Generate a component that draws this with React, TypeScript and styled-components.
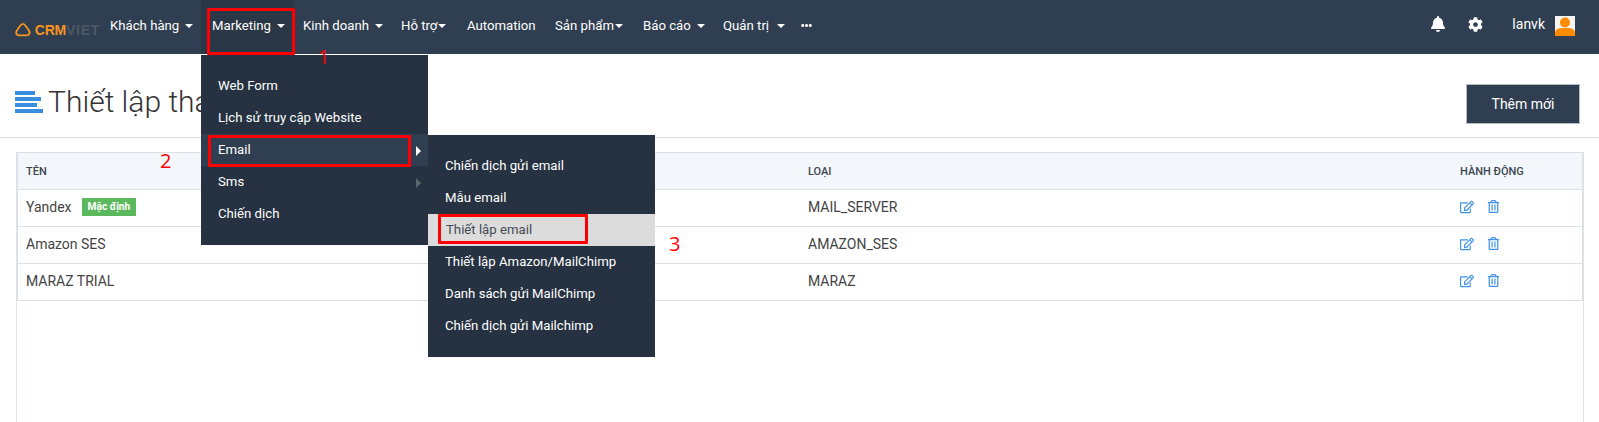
import React from "react";
import styled, { createGlobalStyle } from "styled-components";
import { FaBell, FaCog, FaRegEdit, FaRegTrashAlt, FaEllipsisH } from "react-icons/fa";

const Global = createGlobalStyle`
  html, body { margin: 0; padding: 0; background: #fff; }
  body { font-family: Roboto, "Noto Sans", sans-serif; width: 1599px; height: 422px; overflow: hidden; }
`;
const Page = styled.div`position: relative; width: 1599px; height: 422px; overflow: hidden;`;
const NavBar = styled.nav`height: 54px; background: #2f3e50; display: flex; align-items: flex-start; color: #fff; font-size: 13.2px; font-weight: 400;`;
const Logo = styled.div`display: flex; align-items: center; width: 100px; height: 54px; padding: 5px 0 0 15px; box-sizing: border-box; font-family: "Liberation Sans", sans-serif; font-weight: 700; font-size: 14px;`;
const LogoCrm = styled.span`color: #f7941d; margin-left: 4px; letter-spacing: -0.2px;`;
const LogoViet = styled.span`color: #4c5965; letter-spacing: 0.7px;`;
const NavItem = styled.div<{ $pad?: number; $w: number; $active?: boolean }>`
  height: 54px; width: ${p => p.$w}px; flex: none; display: flex; align-items: center; padding: 0 0 4px ${p => p.$pad ?? 10}px; box-sizing: border-box;
  white-space: nowrap; ${p => p.$active ? "background: #2a3746;" : ""}
`;
const Caret = styled.i<{ $gap: number }>`
  margin: 2px 0 0 ${p => p.$gap}px; width: 0; height: 0; display: block;
  border-left: 4px solid transparent; border-right: 4px solid transparent; border-top: 4px solid #fff;
`;
const Right = styled.div`margin-left: auto; display: flex; align-items: center; height: 48px; padding-right: 24px;`;
const Username = styled.span`font-size: 14px; font-weight: 400; margin: 0 10px 0 29px;`;
const Gear = styled.span`margin-left: 22px; display: flex;`;
const Avatar = styled.svg`width: 20px; height: 20px; display: block; margin-top: 4px;`;
const Header = styled.header`height: 84px; box-sizing: border-box; border-bottom: 1px solid #d5dde3; display: flex; align-items: flex-start; justify-content: space-between; padding: 29px 19px 0 15px;`;
const Title = styled.h1`margin: 0; display: flex; align-items: center; gap: 5px; font-weight: 300; font-size: 30px; color: #333; line-height: 38px;`;
const AddButton = styled.button`width: 114px; height: 40px; margin: 1px 0 0; background: #2f3e50; color: #fff; border: 1px solid #b5bbc0; font: 400 14px Roboto, sans-serif;`;
const Wrap = styled.div`margin: 14px 15px 0 16px; height: 270px; border-left: 1px solid #dde3ee; border-right: 1px solid #dfe1e8;`;
const Table = styled.div`border: 1px solid #dcdfe3; border-bottom: 0;`;
const Row = styled.div<{ $head?: boolean }>`
  display: grid; grid-template-columns: 782px 652px 1fr; height: 37px; box-sizing: border-box; align-items: center;
  border-bottom: 1px solid #dcdfe3; padding: 0 0 ${p => p.$head ? 0 : 2}px 8px; font-size: 14px; color: #444;
  ${p => p.$head ? "background: #f3f6fa; font-size: 11px; font-weight: 500; color: #3c4650;" : ""}
`;
const NameCell = styled.div`display: flex; align-items: center;`;
const Badge = styled.span`margin-left: 10px; background: #5cb85c; color: #fff; font-size: 10.2px; font-weight: 700; padding: 0 6px; height: 18px; line-height: 18px;`;
const Actions = styled.div`display: flex; gap: 13px; color: #3f92e6; align-items: center; margin-top: -1px;`;
const Menu = styled.div`position: absolute; background: #263241; box-sizing: border-box; display: flex; flex-direction: column;`;
const MainMenu = styled(Menu)`left: 201px; top: 55px; width: 227px; height: 190px; padding-top: 15px;`;
const SubMenu = styled(Menu)`left: 428px; top: 135px; width: 227px; height: 222px; padding-top: 15px;`;
const MenuItem = styled.div<{ $state?: "open" | "sel" }>`
  height: 32px; flex: none; display: flex; align-items: center; justify-content: space-between; box-sizing: border-box;
  padding: 0 7px 2px ${p => p.$state === "sel" ? 18 : 17}px; color: #fff; font-size: 13.2px; font-weight: 400; white-space: nowrap;
  ${p => p.$state === "open" ? "background: #2f3e50;" : ""}
  ${p => p.$state === "sel" ? "background: #dcdcdc; color: #454b54;" : ""}
`;
const Arrow = styled.i<{ $dim?: boolean }>`
  width: 0; height: 0; display: block; margin-top: 3px;
  border-top: 5px solid transparent; border-bottom: 5px solid transparent; border-left: 5px solid ${p => p.$dim ? "#5c6670" : "#fff"};
`;
const RedBox = styled.div<{ $l: number; $t: number; $w: number; $h: number }>`
  position: absolute; left: ${p => p.$l}px; top: ${p => p.$t}px; width: ${p => p.$w}px; height: ${p => p.$h}px;
  border: 3px solid #f00; box-sizing: border-box; border-radius: 1px;
`;
const Mark = styled.span<{ $l: number; $t: number }>`
  position: absolute; left: ${p => p.$l}px; top: ${p => p.$t}px; color: #f00; font: 400 20px "Open Sans", sans-serif; line-height: 22px;
`;

const rows = [
  { name: "Yandex", type: "MAIL_SERVER", badge: true },
  { name: "Amazon SES", type: "AMAZON_SES" },
  { name: "MARAZ TRIAL", type: "MARAZ" },
];

export default function App() {
  return (
    <Page>
      <Global />
      <NavBar>
        <Logo>
          <svg width="17" height="15" viewBox="0 0 17 15"><path d="M8.5 1.5 C10 1.5 11 3 12.5 5 L15 8.5 C16.5 11 15.5 13.8 12.5 13.8 H4.5 C1.5 13.8 0.5 11 2 8.5 L4.5 5 C6 3 7 1.5 8.5 1.5 Z" fill="none" stroke="#f7941d" strokeWidth="2" /></svg>
          <LogoCrm>CRM</LogoCrm><LogoViet>VIET</LogoViet>
        </Logo>
        <NavItem $w={101}>Khách hàng<Caret $gap={6} /></NavItem>
        <NavItem $w={92} $pad={11} $active>Marketing<Caret $gap={6} /></NavItem>
        <NavItem $w={98}>Kinh doanh<Caret $gap={6} /></NavItem>
        <NavItem $w={66}>Hỗ trợ<Caret $gap={1} /></NavItem>
        <NavItem $w={88}>Automation</NavItem>
        <NavItem $w={88}>Sản phẩm<Caret $gap={1} /></NavItem>
        <NavItem $w={80}>Báo cáo<Caret $gap={6} /></NavItem>
        <NavItem $w={78}>Quản trị<Caret $gap={8} /></NavItem>
        <NavItem $w={40}><FaEllipsisH size={11} /></NavItem>
        <Right>
          <FaBell size={16} />
          <Gear><FaCog size={15} /></Gear>
          <Username>lanvk</Username>
          <Avatar viewBox="0 0 20 20"><rect width="20" height="20" fill="#f9f6f2" /><circle cx="10" cy="6.5" r="5" fill="#ff8c00" /><path d="M0 20 V16 Q1 12 7 12 H13 Q19 12 20 16 V20 Z" fill="#ff8c00" /></Avatar>
        </Right>
      </NavBar>
      <Header>
        <Title>
          <svg width="28" height="22" viewBox="0 0 28 22"><g fill="#3a8ee0"><rect x="0" y="0" width="20" height="4" /><rect x="0" y="6" width="26" height="4" /><rect x="0" y="12" width="22" height="4" /><rect x="0" y="18" width="28" height="4" /></g></svg>
          Thiết lập tham số
        </Title>
        <AddButton>Thêm mới</AddButton>
      </Header>
      <Wrap>
        <Table>
          <Row $head><div>TÊN</div><div>LOẠI</div><div>HÀNH ĐỘNG</div></Row>
          {rows.map(r => (
            <Row key={r.name}>
              <NameCell>{r.name}{r.badge && <Badge>Mặc định</Badge>}</NameCell>
              <div>{r.type}</div>
              <Actions><FaRegEdit size={14} /><FaRegTrashAlt size={13} /></Actions>
            </Row>
          ))}
        </Table>
      </Wrap>
      <MainMenu>
        <MenuItem>Web Form</MenuItem>
        <MenuItem>Lịch sử truy cập Website</MenuItem>
        <MenuItem $state="open">Email<Arrow /></MenuItem>
        <MenuItem>Sms<Arrow $dim /></MenuItem>
        <MenuItem>Chiến dịch</MenuItem>
      </MainMenu>
      <SubMenu>
        <MenuItem>Chiến dịch gửi email</MenuItem>
        <MenuItem>Mẫu email</MenuItem>
        <MenuItem $state="sel">Thiết lập email</MenuItem>
        <MenuItem>Thiết lập Amazon/MailChimp</MenuItem>
        <MenuItem>Danh sách gửi MailChimp</MenuItem>
        <MenuItem>Chiến dịch gửi Mailchimp</MenuItem>
      </SubMenu>
      <RedBox $l={207} $t={8} $w={88} $h={47} />
      <RedBox $l={208} $t={135} $w={203} $h={32} />
      <RedBox $l={438} $t={214} $w={150} $h={30} />
      <Mark $l={318} $t={46}>1</Mark>
      <Mark $l={160} $t={150}>2</Mark>
      <Mark $l={669} $t={233}>3</Mark>
    </Page>
  );
}
